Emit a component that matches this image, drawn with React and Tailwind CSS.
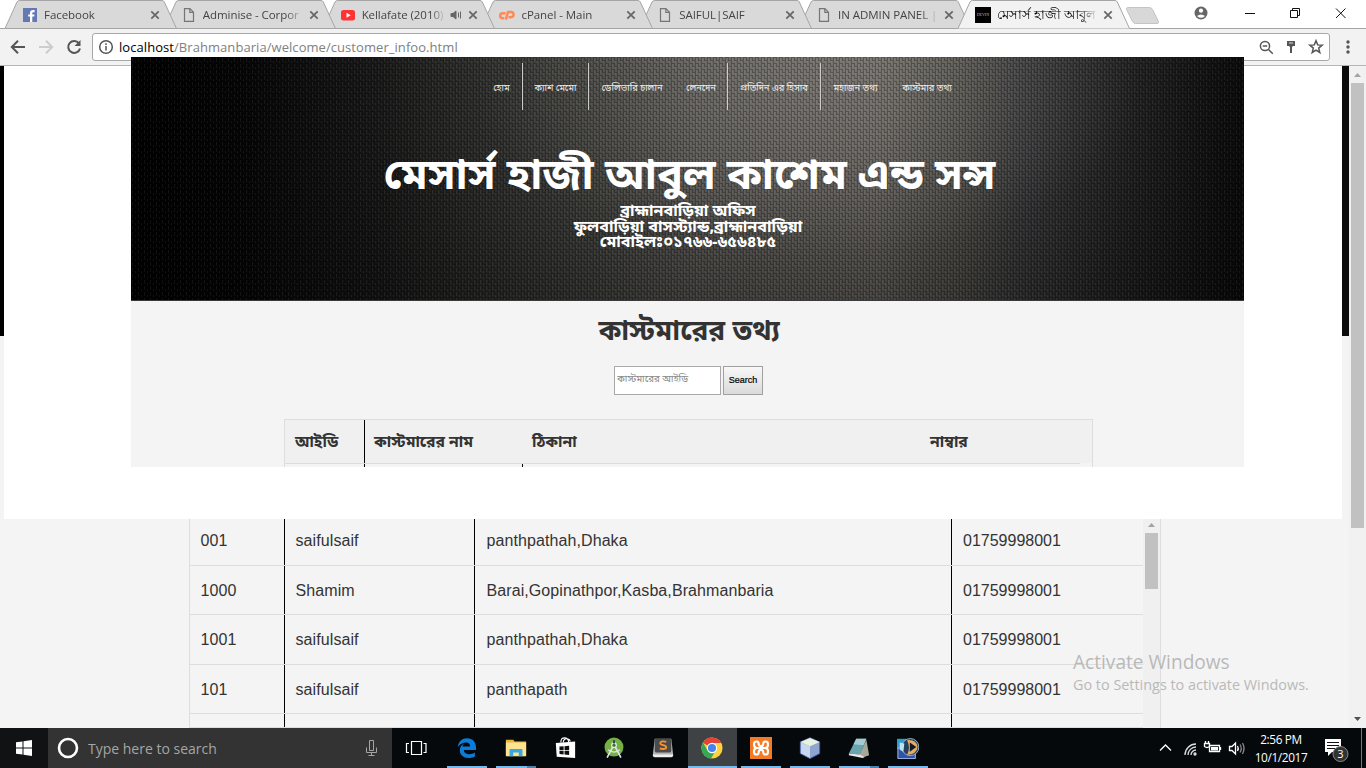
import React from "react";

const UI = "font-['Open_Sans','Noto_Sans',sans-serif]";
const BN = "font-['Noto_Sans_Bengali','Noto_Sans',sans-serif]";

const Doc = () => (
  <svg width="16" height="16" viewBox="0 0 16 16" fill="none" stroke="#757575" strokeWidth="1.2">
    <path d="M3.5 1.6h5.4l3.6 3.6v9.2h-9zM8.8 1.8v3.5h3.6" />
  </svg>
);
const Facebook = () => (
  <svg width="16" height="16" viewBox="0 0 16 16">
    <rect x="1" y="1" width="14" height="14" fill="#6478b4" />
    <path d="M10.3 15V9.6h1.9l.3-2.2h-2.2V6.2c0-.7.3-1 1-1h1.3V3.1c-3.3-.5-4.6.6-4.6 2.8v1.5H6.200v2.200H8V15z" fill="#fff" />
  </svg>
);
const Youtube = () => (
  <svg width="16" height="16" viewBox="0 0 16 16">
    <rect x="1" y="3" width="14" height="10.500" rx="2.500" fill="#f33" />
    <path d="M6.500 5.700v5l4.200-2.500z" fill="#fff" />
  </svg>
);
const Cpanel = () => (
  <svg width="17" height="16" viewBox="0 0 17 16" fill="none" stroke="#ff8a55" strokeWidth="2.500">
    <path d="M7.500 6.200H4.700a2.500 2.500 0 0 0 0 5h1.500M7.800 12.700l2.200-7.700h3a2.400 2.400 0 0 1 0 5.200h-2.500" />
  </svg>
);
const Devin = () => (
  <span className="flex h-4 w-4 items-center justify-center bg-black font-['Liberation_Serif',serif] text-[4px] text-[#c8b98a]">DEVIN</span>
);

const tabs = [
  { icon: Facebook, title: "Facebook" },
  { icon: Doc, title: "Adminise - Corpor" },
  { icon: Youtube, title: "Kellafate (2010)", sound: true },
  { icon: Cpanel, title: "cPanel - Main" },
  { icon: Doc, title: "SAIFUL|SAIF" },
  { icon: Doc, title: "IN ADMIN PANEL |" },
  { icon: Devin, title: "মেসার্স হাজী আবুল", active: true },
];
const zs = ["z-[7]", "z-[6]", "z-[5]", "z-[4]", "z-[3]", "z-[2]", "z-[8]"];

function Tab({ tab, z }) {
  const Icon = tab.icon;
  return (
    <div className={`relative -mr-[13.200px] h-[29px] w-[172px] shrink-0 ${z}`}>
      <svg className="absolute inset-0" width="172" height="29">
        <path d="M0 28.500 12 2 Q12.800.500 14.500.500H157Q158.500.500 159.300 2L171.500 28.500" fill={tab.active ? "#f2f2f2" : "#d9d9d9"} stroke="#a5a5a5" />
        {!tab.active && <path d="M0 28.500H172" stroke="#a5a5a5" />}
      </svg>
      <div className="relative flex h-[29px] items-center pl-[17px] pr-[17px]">
        <Icon />
        <div className={`ml-[6px] flex-1 overflow-hidden whitespace-nowrap ${tab.active ? "text-[12.800px] text-black" : "text-[11.500px] text-[#444]"} tracking-[-0.060px] ${UI} [mask-image:linear-gradient(to_right,black_82%,transparent)]`}>{tab.title}</div>
        {tab.sound && (
          <svg className="ml-1" width="13" height="12" viewBox="0 0 13 12" fill="none" stroke="#666">
            <path d="M1 4.500h2l3-2.500v8L3 7.500H1z" fill="#666" /><path d="M8.500 3.500v5M10.500 2.500v7" />
          </svg>
        )}
        <svg className="ml-[5px]" width="10" height="10" viewBox="0 0 10 10" stroke="#666" strokeWidth="1.700"><path d="M1.300 1.300l7.400 7.400M8.700 1.300L1.300 8.700" /></svg>
      </div>
    </div>
  );
}

function TabStrip() {
  return (
    <div className="flex h-[29px] border-b border-[#a5a5a5] bg-white pl-[5px]">
      {tabs.map((t, i) => <Tab key={i} tab={t} z={zs[i]} />)}
      <svg className="ml-[6px]" width="38" height="28"><path d="M4.500 7.500h22q2 0 3 2l6 12q.500 2-1.500 2H12.500q-2 0-3-2l-6-12q-.500-2 1-2z" fill="#d8d8d8" stroke="#c4c4c4" /></svg>
      <svg className="ml-[32px]" width="16" height="28" viewBox="0 0 16 28">
        <circle cx="8" cy="13" r="6.500" fill="#666" /><circle cx="8" cy="10.700" r="2.100" fill="#fff" /><path d="M4 15.900q4-3 8 0-4 3.800-8 0z" fill="#fff" />
      </svg>
      <svg className="ml-[35px]" width="104" height="28" fill="none" stroke="#111">
        <path d="M1 13.500h10M46.500 10.500h7v7h-7zM48.500 10.500v-2h7v7h-2M92 8.500l9.500 9.500M101.500 8.500L92 18" />
      </svg>
    </div>
  );
}

function Toolbar() {
  return (
    <div className="flex h-[37px] items-center border-b border-[#b5b5b5] bg-[#f2f2f2] pb-px">
      <svg width="92" height="36" fill="none" stroke="#555" strokeWidth="2">
        <path d="M25 18H12.500M18 11.700L11.800 18l6.200 6.300" />
        <path d="M39 18h12.500M46 11.700L52.200 18 46 24.300" stroke="#ccc" />
        <path d="M79 14.300A6 6 0 1 0 80 19.500" /><path d="M80.500 11v6h-6z" fill="#555" stroke="none" />
      </svg>
      <div className={`flex h-[28px] w-[1238px] items-center rounded-[3px] border border-[#a8a8a8] bg-white ${UI}`}>
        <svg className="ml-[5px]" width="16" height="16" viewBox="0 0 16 16" fill="none" stroke="#555" strokeWidth="1.500"><circle cx="8" cy="8" r="6.300" /><path d="M8 7v4.500M8 4.300v1.600" /></svg>
        <span className="ml-[5px] whitespace-nowrap text-[13px] leading-[20px] tracking-[0.060px] text-[#808080]"><span className="text-black">localhost</span>/Brahmanbaria/welcome/customer_infoo.html</span>
        <svg className="ml-auto mr-[3px]" width="68" height="18" fill="none" stroke="#555" strokeWidth="1.500">
          <circle cx="7" cy="8" r="4.600" /><path d="M10.500 11.500l4.300 4.300M4.800 8h4.400" />
          <path d="M29 3h8v5h-2l-1 1v6h-2V9l-1-1h-2z" fill="#555" stroke="none" /><path d="M31 5h4" stroke="#ddd" strokeWidth="1" />
          <path d="M58 2.700l1.700 4.200 4.500.300-3.500 2.900 1.100 4.400L58 12.100l-3.800 2.400 1.100-4.400-3.500-2.900 4.500-.300z" />
        </svg>
      </div>
      <svg className="ml-[14px]" width="8" height="20" fill="#555"><circle cx="4" cy="5" r="1.700" /><circle cx="4" cy="10" r="1.700" /><circle cx="4" cy="15" r="1.700" /></svg>
    </div>
  );
}

const nav = [
  ["হোম", "w-[42px] border-r"],
  ["ক্যাশ মেমো", "w-[66px] border-r"],
  ["ডেলিভারি চালান", "w-[86px]"],
  ["লেনদেন", "w-[53px] border-r"],
  ["প্রতিদিন এর হিসাব", "w-[93px] border-r"],
  ["মহাজন তথ্য", "w-[69px]"],
  ["কাস্টমার তথ্য", "w-[74px]"],
];

const Weave = () => (
  <svg className="absolute inset-0" width="1113" height="243">
    <defs>
      <pattern id="weave" width="6" height="6" patternUnits="userSpaceOnUse">
        <path d="M0 .5h3M3 3.500h3M.5 1v5M3.500 0v3" stroke="#000" strokeOpacity=".26" />
        <path d="M1.500 1v4M4.500 4v2" stroke="#fff" strokeOpacity=".06" />
      </pattern>
    </defs>
    <rect width="1113" height="243" fill="url(#weave)" />
  </svg>
);

function Banner() {
  return (
    <header className={`relative h-[244px] border-b border-[#3a3a3a] pt-[6px] text-white ${BN} bg-[radial-gradient(ellipse_330px_170px_at_680px_30px,rgba(150,145,140,.3),transparent),linear-gradient(180deg,transparent_0%,rgba(0,0,0,.12)_40%,rgba(0,0,0,.38)_100%),linear-gradient(90deg,#000_0%,#060606_10%,#1a1a1a_22%,#353533_33%,#4a4a46_42%,#62605c_51%,#6b6863_60%,#706c67_67%,#595852_74%,#404042_80%,#292929_88%,#0b0b0b_100%)]`}>
      <Weave />
      <nav className="relative ml-[350px] flex h-[47px]">
        {nav.map(([t, w]) => (
          <a key={t} className={`flex shrink-0 items-center justify-center whitespace-nowrap border-[#ccc] pt-[4px] text-[9.300px] text-[#ededed] ${w}`}>{t}</a>
        ))}
      </nav>
      <h1 className="relative mt-[40px] ml-[4px] whitespace-nowrap text-center text-[43.150px] font-bold leading-[56px]">মেসার্স হাজী আবুল কাশেম এন্ড সন্স</h1>
      <div className="relative -mt-px ml-[1px] text-center text-[16.100px] font-bold leading-[15.500px]">
        <p>ব্রাহ্মানবাড়িয়া অফিস</p>
        <p>ফুলবাড়িয়া বাসস্ট্যান্ড,ব্রাহ্মানবাড়িয়া</p>
        <p>মোবাইলঃ০১৭৬৬-৬৫৬৪৮৫</p>
      </div>
    </header>
  );
}

function CustomerPanel() {
  return (
    <section className={`relative z-10 -mt-[9px] ml-[127px] h-[410px] w-[1113px] overflow-hidden bg-[#f4f4f4] text-[#333] ${BN}`}>
      <Banner />
      <h2 className="mt-[10px] ml-[3px] h-[42px] whitespace-nowrap text-center text-[28px] font-bold leading-[44px]">কাস্টমারের তথ্য</h2>
      <form className="mt-[13px] ml-[483px] flex h-[29px] gap-[2px]">
        <input placeholder="কাস্টমারের আইডি" className="w-[107px] border border-[#a9a9a9] bg-white px-[2px] text-[9.700px] placeholder:text-[#888]" />
        <button type="button" className="w-[40px] border border-[#a0a0a0] bg-linear-to-b from-[#f8f8f8] to-[#dadada] font-['Liberation_Sans',sans-serif] text-[9px] text-black [-webkit-text-stroke:.2px_black]">Search</button>
      </form>
      <div className="ml-[153px] mt-[24px] w-[809px] border border-[#ddd]">
        <div className="flex h-[43px] bg-[#f0f0f0] text-[15.700px] font-bold leading-[46px] whitespace-nowrap">
          <div className="w-[80px] border-r border-black pl-[10px]">আইডি</div>
          <div className="w-[158px] pl-[9px]">কাস্টমারের নাম</div>
          <div className="w-[398px] pl-[9px]">ঠিকানা</div>
          <div className="pl-[9px]">নাম্বার</div>
        </div>
        <div className="flex h-[50px] w-[795px] border-t border-[#ddd]">
          <div className="w-[80px] border-r border-black" />
          <div className="w-[158px] border-r border-black" />
        </div>
      </div>
    </section>
  );
}

const rows = [
  ["001", "saifulsaif", "panthpathah,Dhaka", "01759998001", "h-[47px] leading-[48px]"],
  ["1000", "Shamim", "Barai,Gopinathpor,Kasba,Brahmanbaria", "01759998001", "h-[49px] leading-[46px]"],
  ["1001", "saifulsaif", "panthpathah,Dhaka", "01759998001", "h-[50px] leading-[48px]"],
  ["101", "saifulsaif", "panthapath", "01759998001", "h-[49px] leading-[46px]"],
  ["", "", "", "", "h-[14px]"],
];

function Records() {
  return (
    <div className="ml-[189px] flex h-[209px] w-[972px] overflow-hidden border-x border-[#ddd] font-['Liberation_Sans',sans-serif] text-[16px] tracking-[0.090px] text-[#333]">
      <div className="w-[953px]">
        {rows.map(([id, name, addr, num, h], i) => (
          <div key={i} className={`flex border-b border-[#ddd] ${h}`}>
            <div className="flex w-[95px] items-end border-r border-black pl-[10.500px]">{id}</div>
            <div className="flex w-[190px] items-end border-r border-black pl-[10.500px]">{name}</div>
            <div className="flex w-[477px] items-end border-r border-black pl-[11.500px]">{addr}</div>
            <div className="flex items-end pl-[11px] tracking-normal">{num}</div>
          </div>
        ))}
      </div>
      <div className="flex w-[17px] flex-col items-center bg-[#f0f0f0]">
        <svg width="17" height="14"><path d="M5 8l3.500-4L12 8z" fill="#a3a3a3" /></svg>
        <div className="h-[56px] w-[13px] bg-[#c1c1c1]" />
      </div>
    </div>
  );
}

function Page() {
  return (
    <div className="flex h-[662px]">
      <div className="w-[1349px] bg-[#f4f4f4]">
        <div className="flex h-[453px]">
          <div className="h-[270px] w-[4px] bg-black" />
          <div className="h-[453px] w-[1338px] bg-white"><CustomerPanel /></div>
          <div className="h-[270px] w-[7px] bg-[#0c0c0c]" />
        </div>
        <Records />
      </div>
      <div className="flex w-[17px] flex-col items-center bg-[#f1f1f1]">
        <svg width="17" height="17"><path d="M5 11l3.500-4 3.500 4z" fill="#a3a3a3" /></svg>
        <div className="h-[445px] w-[13px] bg-[#c1c1c1]" />
        <svg className="mt-auto" width="17" height="17"><path d="M5 6l3.500 4L12 6z" fill="#505050" /></svg>
      </div>
    </div>
  );
}

const Edge = () => (
  <svg width="24" height="24" viewBox="0 0 24 24"><path d="M2 10.800C2.700 5 6.800 1.500 12 1.500c6.300 0 9.800 4.300 9.800 10.300v2.300H8.600c.200 3.200 3 4.600 6.100 4.600 2.100 0 4.100-.600 5.900-1.700v4.300c-2 1.100-4.300 1.600-6.900 1.600-5.600 0-9.500-3.300-9.500-8.400 0-3.400 1.700-6 4.800-7.500-1.200 1-1.700 2.200-1.900 3.300h8.200c0-2.600-1.300-4.300-4.200-4.300-3.600 0-6.800 1.900-9.100 4.800z" fill="#0a7ddb" /></svg>
);
const Folder = () => (
  <svg width="24" height="24" viewBox="0 0 24 24"><path d="M1 3h8l1.500 2H23v15H1z" fill="#e8b53a" /><path d="M1 6h22v15H1z" fill="#fde391" /><path d="M5 21v-7q0-1 1-1h12q1 0 1 1v7h-4v-4H9v4z" fill="#36a6e4" /></svg>
);
const Store = () => (
  <svg width="24" height="24" viewBox="0 0 24 24"><path d="M2 6.500L23 5v18L3 21.500z" fill="#fff" /><path d="M7.500 6q0-5 4-5t4.500 4.500M10 6q.500-4.500 4.500-4 3 .500 3 3" fill="none" stroke="#fff" strokeWidth="1.200" /><path d="M6 10.500l4.500-.400v4H6zM11.500 10l5-.400v4.500h-5zM6 15h4.500v4L6 18.600zM11.500 15h5v4.500l-5-.400z" fill="#0c0f12" /></svg>
);
const Android = () => (
  <svg width="24" height="24" viewBox="0 0 24 24"><circle cx="12" cy="11" r="10.300" fill="#74b043" /><path d="M10.500 11L4.500 22.500M13.500 11l6 11.500" stroke="#e0e5e8" strokeWidth="1.800" /><path d="M5.500 14q6.500 5 13 0" fill="none" stroke="#e0e5e8" strokeWidth="1.400" /><circle cx="12" cy="9" r="3.200" fill="#dfe8dc" /><circle cx="12" cy="9" r="1.700" fill="#3d6b35" /><path d="M12 3.500V7" stroke="#37474f" strokeWidth="2.200" /></svg>
);
const Sublime = () => (
  <svg width="24" height="24" viewBox="0 0 24 24"><path d="M3 2h18l2 17q0 2-2 2H3q-2 0-2-2z" fill="#b5b5b5" /><path d="M1 19h22v1q0 2-2 2H3q-2 0-2-2z" fill="#eee" /><rect x="3" y="2" width="18" height="15" rx="2" fill="#4b4b4b" /><path d="M15.500 5.500c-3-1.300-6.500-.800-6.500 1.300 0 2.500 6.500 1.600 6.500 4.300 0 2.300-4 2.400-7 1.200" fill="none" stroke="#f79433" strokeWidth="2" /></svg>
);
const Chrome = () => (
  <svg width="24" height="24" viewBox="0 0 24 24"><circle cx="12" cy="12" r="11.500" fill="#fdd23e" /><path d="M12 12L2 6.200A11.500 11.500 0 0 1 22 6.500H12z" fill="#e24538" /><path d="M7 14.500L2.200 6A11.500 11.500 0 0 0 11 23.500l5-9z" fill="#36a853" /><circle cx="12" cy="12" r="5.600" fill="#fff" /><circle cx="12" cy="12" r="4.400" fill="#4583ee" /></svg>
);
const Xampp = () => (
  <svg width="24" height="24" viewBox="0 0 24 24"><rect x="-.500" y="-.500" width="25" height="25" rx="2" fill="#f47b26" /><path d="M9.500 9V7.500Q9.500 5 7 5T4.500 7.500V9Q4.500 12 8 12h8q3.500 0 3.500-3V7.500Q19.500 5 17 5t-2.500 2.500T12 10 9.500 7.500M9.500 15v1.500Q9.500 19 7 19t-2.500-2.500V15Q4.500 12 8 12h8q3.500 0 3.500 3v1.500Q19.500 19 17 19t-2.500-2.500T12 14t-2.500 2.500" fill="none" stroke="#fff" strokeWidth="2.300" /></svg>
);
const Cube = () => (
  <svg width="24" height="24" viewBox="0 0 24 24" stroke="#4b62a8" strokeWidth="1"><path d="M12 .800l10.500 4.700v12.500L12 23.500 1.500 18V5.500z" fill="#8fa5cf" /><path d="M12 1l10.500 4.500L12 10 1.500 5.500z" fill="#e8f2df" stroke="none" /><path d="M2 6L12 10v13L2 17.700z" fill="#c8d7ed" stroke="none" /></svg>
);
const Notepad = () => (
  <svg width="24" height="24" viewBox="0 0 24 24"><path d="M20 3l3 17-6 2-5-2z" fill="#a9a79a" /><path d="M9 2h11L13 19 1 18z" fill="#69a5b1" /><path d="M9 2h11l-3 7L6 8z" fill="#a5ccd3" /><path d="M1 18l12 1 5 3-2 1-15-3z" fill="#e6e8e8" /></svg>
);
const Download = () => (
  <svg width="24" height="24" viewBox="0 0 24 24"><path d="M0 2h10v11H0z" fill="#2f9fd0" /><path d="M1 12h19v11.500H1z" fill="#2c55a5" stroke="#aec4f2" /><circle cx="14.500" cy="11" r="9.300" fill="#27405f" stroke="#9fb6cc" strokeWidth="1" /><path d="M11 3.500q10-1 11.500 7.500-1 8-11.500 8.500 4-8 0-16z" fill="#e3ac66" /><path d="M14 6l7 5-7 5z" fill="#14181f" /><path d="M3 6l5 1-1 9-4-2z" fill="#bfe4f0" /></svg>
);

const apps = [
  [Edge, "bg-[#76b9ed]"], [Folder, "bg-linear-to-r from-[#76b9ed] from-78% to-[#4c82ad] to-78%"], [Store, ""], [Android, ""], [Sublime, ""],
  [Chrome, "bg-[#76b9ed]", true], [Xampp, "bg-[#76b9ed]"], [Cube, "bg-[#76b9ed]"], [Notepad, "bg-linear-to-r from-[#76b9ed] from-78% to-[#4c82ad] to-78%"], [Download, "bg-[#76b9ed]"],
];

function Taskbar() {
  return (
    <footer className={`flex h-[40px] bg-[#06090c] ${UI}`}>
      <div className="flex w-[48px] items-center justify-center bg-[#101214]">
        <svg width="16" height="16" fill="#fff"><path d="M0 2.300L6.500 1.400V7.500H0zM7.500 1.200L16 0v7.500H7.500zM0 8.500h6.500v6.100L0 13.700zM7.500 8.500H16V16l-8.500-1.200z" /></svg>
      </div>
      <div className="flex w-[344px] items-center bg-[#333]">
        <svg className="ml-[9px]" width="22" height="22"><circle cx="11" cy="11" r="9" fill="none" stroke="#fff" strokeWidth="2.600" /></svg>
        <span className="ml-[9px] text-[14px] text-[#a5a5a5]">Type here to search</span>
        <svg className="ml-auto mr-[14px]" width="13" height="18" fill="none" stroke="#a5a5a5"><path d="M4.500 1.500h4v10h-4zM1.500 8.500v5h10v-5M6.500 13.500v3M3.500 16.500h6" /></svg>
      </div>
      <div className="flex w-[51px] items-center justify-center pr-[3px]">
        <svg width="22" height="16" fill="none" stroke="#fff" strokeWidth="1.200"><path d="M6.500 1.500h10v13h-10zM4 3.500H1.500v9H4M18.500 3.500H21v9h-2.500" /></svg>
      </div>
      {apps.map(([Icon, bar, active], i) => (
        <div key={i} className={`flex w-[48.960px] shrink-0 flex-col items-center ${active ? "bg-[#3f4245]" : ""}`}>
          <div className="flex h-[38px] items-center pt-[2px]"><div className="h-[24px] w-[24px] scale-[.92]"><Icon /></div></div>
          <div className={`h-[2px] ${active ? "w-full" : "w-[40px]"} ${bar}`} />
        </div>
      ))}
      <div className="ml-auto flex items-center pr-[4px]">
        <svg width="88" height="20" fill="none" stroke="#fff" strokeWidth="1.300">
          <path d="M1 12.500L6.500 7l5.500 5.500" />
          <g stroke="#ddd"><path d="M26 17A11 11 0 0 1 37 6M29 17a8 8 0 0 1 8-8M32 17a5 5 0 0 1 5-5" /><circle cx="36" cy="16" r="1" fill="#fff" /></g>
          <path d="M50.500 7.500h10v6h-10zM61.500 9v3" /><path d="M52 9h7v3.500h-7z" fill="#fff" stroke="none" /><path d="M45.500 5.500h5v3q-2.500 2-5 0zM46.500 3v2M49.500 3v2" />
          <path d="M70.500 8.500h2.500l3.500-3.500v11L73 12.500h-2.500z" /><path d="M78.500 8q1.500 2.500 0 5" /><path d="M81 6.500q2.500 4 0 8M83.500 5q3 5.500 0 11" stroke="#888" />
        </svg>
        <div className="ml-[7px] w-[54px] whitespace-nowrap text-center text-[11.800px] leading-[18px] tracking-[-0.350px] text-white"><div>2:56 PM</div><div>10/1/2017</div></div>
        <svg className="ml-[16px]" width="26" height="28">
          <path d="M1 5h16v13H8l-4 4v-4H1z" fill="#fff" /><path d="M3 8.500h12M3 11.500h12M3 14.500h8" stroke="#111" /><circle cx="16.500" cy="20" r="7.500" fill="#303234" stroke="#888" />
          <text x="16.500" y="24" textAnchor="middle" fontSize="11" fill="#fff" fontFamily="Open Sans">3</text>
        </svg>
        <div className="ml-[11px] h-[40px] w-px bg-[#777]" />
      </div>
    </footer>
  );
}

export default function App() {
  return (
    <div className="relative flex h-[768px] w-[1366px] flex-col overflow-hidden bg-white">
      <TabStrip />
      <Toolbar />
      <Page />
      <Taskbar />
      <div className={`pointer-events-none absolute left-[1073px] top-[649px] z-20 whitespace-nowrap text-[#b9b9b9] ${UI}`}>
        <div className="text-[19.100px] leading-[26px]">Activate Windows</div>
        <div className="text-[14.400px] leading-[20px]">Go to Settings to activate Windows.</div>
      </div>
    </div>
  );
}
